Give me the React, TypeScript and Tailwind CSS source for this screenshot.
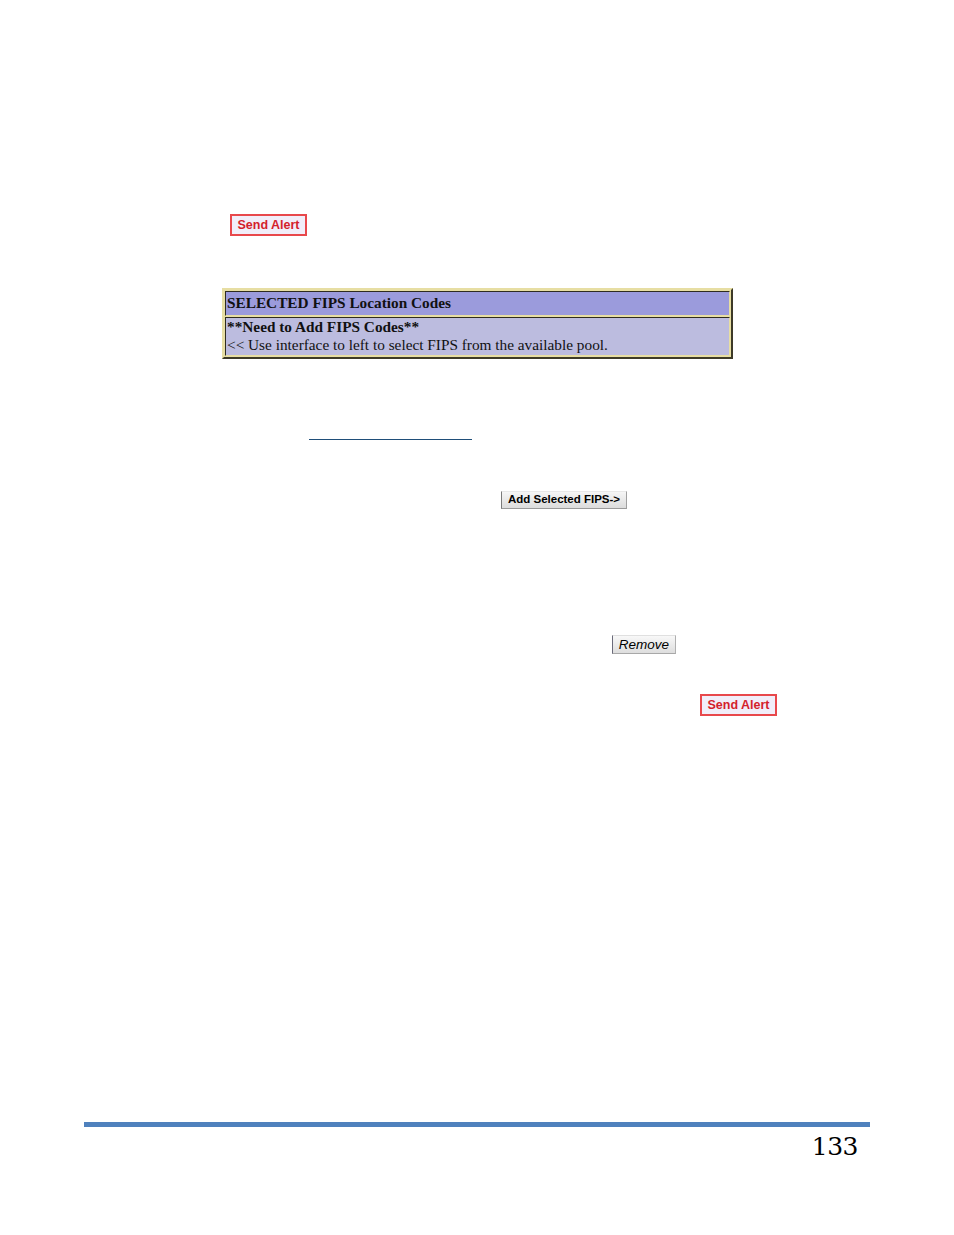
import React from "react";

const btnRed =
  "flex items-center justify-center border-2 border-[#e8484c] bg-[#f1eef9] text-[#d41f2c] font-bold text-[12.5px] leading-none";

export default function App() {
  return (
    <div className="w-[954px] h-[1235px] bg-white relative font-['Liberation_Sans',Arial,sans-serif]">
      <div className="pt-[214px] pl-[230px]">
        <button className={`${btnRed} w-[77px] h-[22px]`}>Send Alert</button>
      </div>

      <div className="ml-[222px] mt-[52px] w-[511px] h-[71px] border-2 border-t-[#e7dea3] border-l-[#e7dea3] border-b-[#3d3a28] border-r-[#3d3a28] bg-[#e7dea3] p-[1px] flex flex-col gap-[1px] font-['Liberation_Serif','Times_New_Roman',serif] text-[#111] text-[15.3px]">
        <div className="h-[25px] border border-t-[#2e2c20] border-l-[#2e2c20] border-b-[#e7dea3] border-r-[#e7dea3] bg-[#9b9bdc] px-[1px] pb-[2px] flex items-center font-bold leading-none">
          SELECTED FIPS Location Codes
        </div>
        <div className="flex-1 border border-t-[#2e2c20] border-l-[#2e2c20] border-b-[#e7dea3] border-r-[#e7dea3] bg-[#bcbcdf] px-[1px] leading-[18px]">
          <div className="font-bold">**Need to Add FIPS Codes**</div>
          <div>&lt;&lt; Use interface to left to select FIPS from the available pool.</div>
        </div>
      </div>

      <div className="ml-[309px] mt-[80px] w-[163px] h-[1px] bg-[#1f4e79]" />

      <div className="ml-[501px] mt-[51px]">
        <button className="flex items-center justify-center w-[126px] h-[18px] border border-t-[#e8e8e8] border-l-[#7a7a7a] border-b-[#9a9a9a] border-r-[#a0a0a0] bg-gradient-to-b from-[#f6f6f6] to-[#dcdcdc] text-black font-bold text-[11.5px] leading-none">
          Add Selected FIPS-&gt;
        </button>
      </div>

      <div className="ml-[612px] mt-[126px]">
        <button className="flex items-center justify-center w-[64px] h-[19px] border border-t-[#e0e0e0] border-l-[#6a6a7a] border-b-[#a8a8a8] border-r-[#b0b0b0] bg-gradient-to-b from-[#f8f8f8] to-[#dedede] text-black italic text-[13.5px] leading-none">
          Remove
        </button>
      </div>

      <div className="ml-[700px] mt-[40px]">
        <button className={`${btnRed} w-[77px] h-[22px]`}>Send Alert</button>
      </div>

      <div className="ml-[84px] mt-[406px] w-[786px] h-[5px] bg-[#4f81bd]" />
      <div className="w-[858px] mt-[5px] text-right font-['DejaVu_Serif',Cambria,serif] text-[25px] leading-[30px] text-black tracking-[-0.5px]">
        133
      </div>
    </div>
  );
}
